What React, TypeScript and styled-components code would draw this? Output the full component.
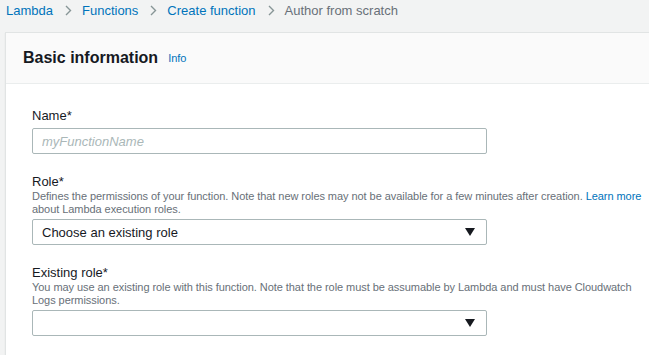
import React from 'react'
import styled, { createGlobalStyle } from 'styled-components'

const GlobalStyle = createGlobalStyle`
  html, body {
    margin: 0;
    padding: 0;
    background: #f2f3f3;
    font-family: 'Liberation Sans', Arial, sans-serif;
    overflow: hidden;
  }
`

const Page = styled.div`
  width: 649px;
  height: 355px;
  overflow: hidden;
`
const Crumbs = styled.nav`
  display: flex;
  align-items: center;
  height: 20px;
  padding-left: 6px;
  font-size: 13px;
`
const Crumb = styled.span`
  color: ${({ $current }: CrumbProps) => ($current ? '#687078' : '#0073bb')};
`
const Chevron = styled.svg`
  margin: 0 10px 0 12px;
`
const Card = styled.section`
  margin: 12px 0 0 5px;
  width: 680px;
  background: #fff;
  border: 1px solid #e1e4e4;
  box-shadow: 0 1px 1px rgba(0, 28, 36, 0.1);
`
const CardHeader = styled.header`
  display: flex;
  align-items: center;
  height: 50px;
  padding-left: 17px;
  background: #fafafa;
  border-bottom: 1px solid #eaeded;
`
const Title = styled.h2`
  margin: 0;
  font-size: 16px;
  font-weight: 700;
  color: #16191f;
`
const InfoLink = styled.a`
  margin-left: 10px;
  font-size: 11px;
  color: #0073bb;
`
const CardBody = styled.div`
  padding: 24px 0 20px 26px;
  display: flex;
  flex-direction: column;
  gap: 20px;
`
const Field = styled.div`
  display: flex;
  flex-direction: column;
`
const Label = styled.label`
  font-size: 13px;
  line-height: 16px;
  color: #16191f;
`
const Description = styled.div`
  width: 614px;
  font-size: 11px;
  line-height: 13px;
  letter-spacing: -0.06px;
  color: #687078;
`
const Link = styled.a`
  color: #0073bb;
`
const Input = styled.input`
  box-sizing: border-box;
  width: 455px;
  height: 26px;
  margin-top: ${({ $gap }: GapProps) => $gap}px;
  padding: 0 9px;
  border: 1px solid #aab7b8;
  border-radius: 2px;
  font-family: inherit;
  font-size: 13px;
  &::placeholder {
    color: #aab7b8;
    font-style: italic;
  }
`
const Select = styled.div`
  box-sizing: border-box;
  display: flex;
  align-items: center;
  justify-content: space-between;
  width: 455px;
  height: 26px;
  margin-top: ${({ $gap }: GapProps) => $gap}px;
  padding: 0 11px 0 9px;
  border: 1px solid #aab7b8;
  border-radius: 2px;
  font-size: 13px;
  color: #16191f;
  background: #fff;
`
const Caret = styled.svg`
  flex-shrink: 0;
`

const ChevronIcon = () => (
  <Chevron width="7" height="11" viewBox="0 0 7 11">
    <path d="M1 1l4.5 4.5L1 10" fill="none" stroke="#879596" strokeWidth="1.4" />
  </Chevron>
)

const CaretIcon = () => (
  <Caret width="10" height="8" viewBox="0 0 10 8">
    <path d="M0 0h10L5 8z" fill="#16191f" />
  </Caret>
)

const App = () => {
  return (
    <Page>
      <GlobalStyle />
      <Crumbs>
        <Crumb>Lambda</Crumb>
        <ChevronIcon />
        <Crumb>Functions</Crumb>
        <ChevronIcon />
        <Crumb>Create function</Crumb>
        <ChevronIcon />
        <Crumb $current>Author from scratch</Crumb>
      </Crumbs>
      <Card>
        <CardHeader>
          <Title>Basic information</Title>
          <InfoLink>Info</InfoLink>
        </CardHeader>
        <CardBody>
          <Field>
            <Label>Name*</Label>
            <Input $gap={4} placeholder="myFunctionName" />
          </Field>
          <Field>
            <Label>Role*</Label>
            <Description>
              Defines the permissions of your function. Note that new roles may not be available for a
              few minutes after creation. <Link>Learn more</Link> about Lambda execution roles.
            </Description>
            <Select $gap={3}>
              Choose an existing role
              <CaretIcon />
            </Select>
          </Field>
          <Field>
            <Label>Existing role*</Label>
            <Description>
              You may use an existing role with this function. Note that the role must be assumable by
              Lambda and must have Cloudwatch Logs permissions.
            </Description>
            <Select $gap={3}>
              <span />
              <CaretIcon />
            </Select>
          </Field>
        </CardBody>
      </Card>
    </Page>
  )
}

type CrumbProps = {
  $current?: boolean
}
type GapProps = {
  $gap: number
}

export default App
